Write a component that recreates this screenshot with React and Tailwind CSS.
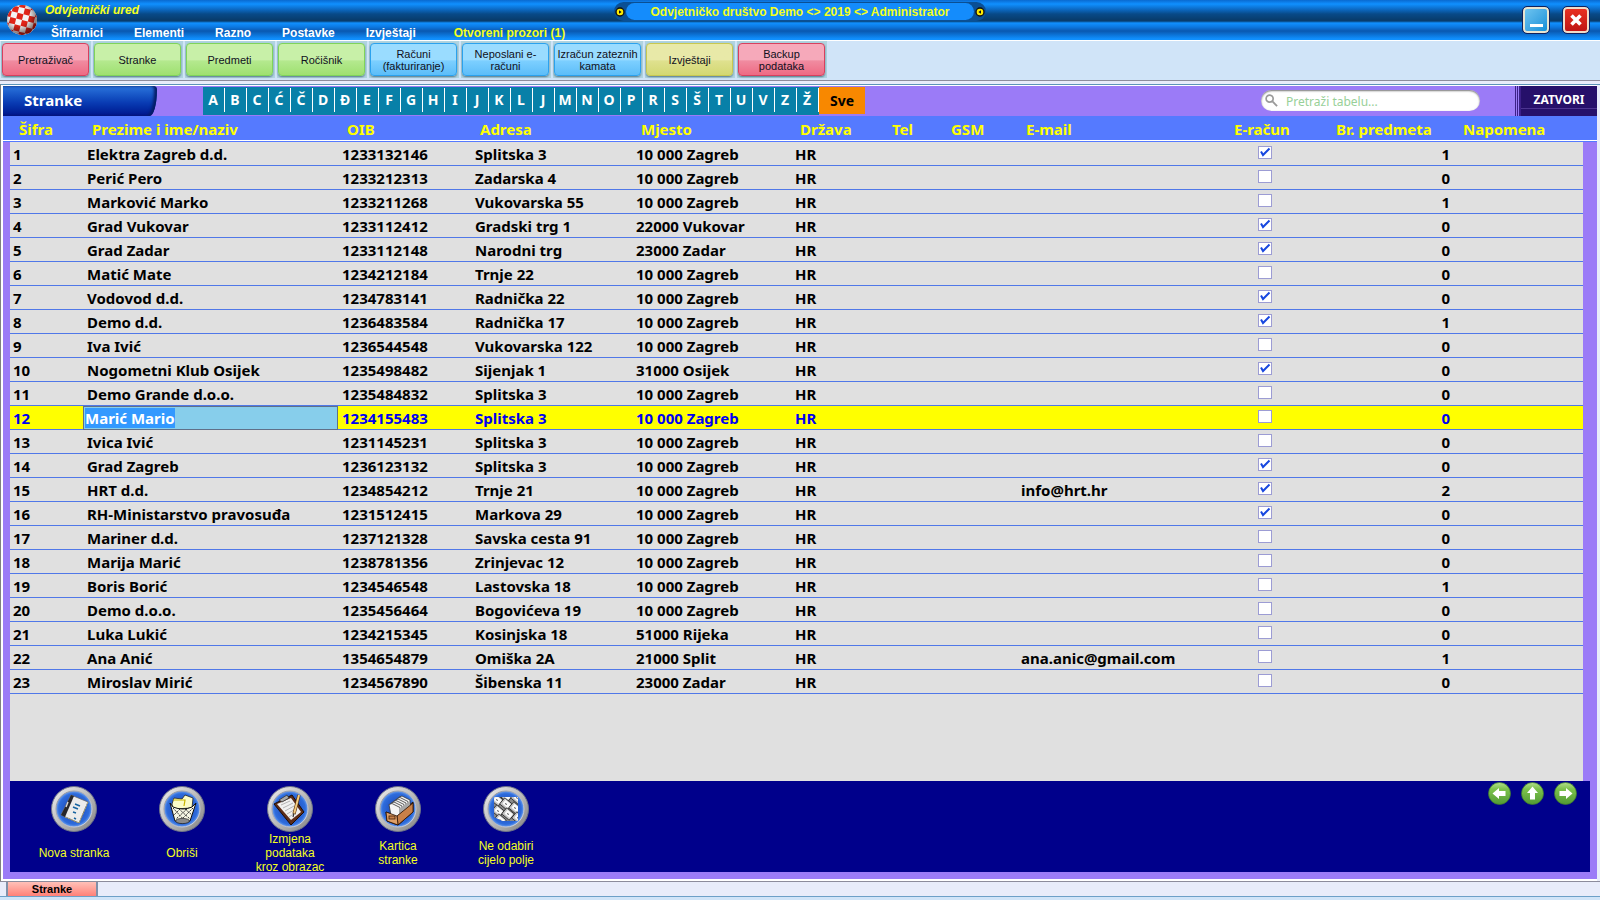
import React, { useEffect, useRef } from "react";

const MENU = ["Šifrarnici", "Elementi", "Razno", "Postavke", "Izvještaji"];

const COLORS = {
  red: "border-[#d8405e] bg-linear-to-b from-[#f6a9ba] from-50% via-[#f08ba0] via-55% to-[#ee6a84]",
  green:
    "border-[#7fd45a] bg-linear-to-b from-[#c8f0a8] from-50% via-[#b4e98e] via-55% to-[#9fe070]",
  blue: "border-[#2ba2ee] bg-linear-to-b from-[#9adcff] from-50% via-[#7ccfff] via-55% to-[#5cbdf8]",
  yellow:
    "border-[#c8c850] bg-linear-to-b from-[#e8e9a8] from-50% via-[#dfe18e] via-55% to-[#d3d872]",
};

const TOOLBAR = [
  { label: "Pretraživač", color: "red" },
  { label: "Stranke", color: "green" },
  { label: "Predmeti", color: "green" },
  { label: "Ročišnik", color: "green" },
  { label: "Računi (fakturiranje)", color: "blue" },
  { label: "Neposlani e-računi", color: "blue" },
  { label: "Izračun zateznih kamata", color: "blue" },
  { label: "Izvještaji", color: "yellow" },
  { label: "Backup podataka", color: "red" },
];

const LETTERS = "A B C Ć Č D Đ E F G H I J K L J M N O P R S Š T U V Z Ž".split(" ");

// sifra, naziv, oib, adresa, mjesto, e-mail, e-racun, br. predmeta
const STRANKE = [
  [1, "Elektra Zagreb d.d.", "1233132146", "Splitska 3", "10 000 Zagreb", "", true, 1],
  [2, "Perić Pero", "1233212313", "Zadarska 4", "10 000 Zagreb", "", false, 0],
  [3, "Marković Marko", "1233211268", "Vukovarska 55", "10 000 Zagreb", "", false, 1],
  [4, "Grad Vukovar", "1233112412", "Gradski trg 1", "22000 Vukovar", "", true, 0],
  [5, "Grad Zadar", "1233112148", "Narodni trg", "23000 Zadar", "", true, 0],
  [6, "Matić Mate", "1234212184", "Trnje 22", "10 000 Zagreb", "", false, 0],
  [7, "Vodovod d.d.", "1234783141", "Radnička 22", "10 000 Zagreb", "", true, 0],
  [8, "Demo d.d.", "1236483584", "Radnička 17", "10 000 Zagreb", "", true, 1],
  [9, "Iva Ivić", "1236544548", "Vukovarska 122", "10 000 Zagreb", "", false, 0],
  [10, "Nogometni Klub Osijek", "1235498482", "Sijenjak 1", "31000 Osijek", "", true, 0],
  [11, "Demo Grande d.o.o.", "1235484832", "Splitska 3", "10 000 Zagreb", "", false, 0],
  [12, "Marić Mario", "1234155483", "Splitska 3", "10 000 Zagreb", "", false, 0],
  [13, "Ivica Ivić", "1231145231", "Splitska 3", "10 000 Zagreb", "", false, 0],
  [14, "Grad Zagreb", "1236123132", "Splitska 3", "10 000 Zagreb", "", true, 0],
  [15, "HRT d.d.", "1234854212", "Trnje 21", "10 000 Zagreb", "info@hrt.hr", true, 2],
  [16, "RH-Ministarstvo pravosuđa", "1231512415", "Markova 29", "10 000 Zagreb", "", true, 0],
  [17, "Mariner d.d.", "1237121328", "Savska cesta 91", "10 000 Zagreb", "", false, 0],
  [18, "Marija Marić", "1238781356", "Zrinjevac 12", "10 000 Zagreb", "", false, 0],
  [19, "Boris Borić", "1234546548", "Lastovska 18", "10 000 Zagreb", "", false, 1],
  [20, "Demo d.o.o.", "1235456464", "Bogovićeva 19", "10 000 Zagreb", "", false, 0],
  [21, "Luka Lukić", "1234215345", "Kosinjska 18", "51000 Rijeka", "", false, 0],
  [22, "Ana Anić", "1354654879", "Omiška 2A", "21000 Split", "ana.anic@gmail.com", false, 1],
  [23, "Miroslav Mirić", "1234567890", "Šibenska 11", "23000 Zadar", "", false, 0],
];

const SELECTED = 12;

const COLUMNS = [
  { title: "Šifra", width: "w-[73px]" },
  { title: "Prezime i ime/naziv", width: "w-[255px]" },
  { title: "OIB", width: "w-[133px]" },
  { title: "Adresa", width: "w-[161px]" },
  { title: "Mjesto", width: "w-[159px]" },
  { title: "Država", width: "w-[92px]" },
  { title: "Tel", width: "w-[59px]" },
  { title: "GSM", width: "w-[75px]" },
  { title: "E-mail", width: "w-[208px]" },
  { title: "E-račun", width: "w-[102px]" },
  { title: "Br. predmeta", width: "w-[127px]" },
  { title: "Napomena", width: "w-auto" },
];

function Logo() {
  const squares = [];
  for (let r = 0; r < 6; r++) {
    for (let c = 0; c < 6; c++) {
      if ((r + c) % 2 === 0) {
        squares.push(<rect key={r + "-" + c} x={c * 6 - 2} y={r * 6 - 2} width="6" height="6" />);
      }
    }
  }
  return (
    <svg viewBox="0 0 32 32" className="h-8 w-8">
      <defs>
        <clipPath id="ball">
          <circle cx="16" cy="16" r="15" />
        </clipPath>
        <radialGradient id="ballShade" cx="0.4" cy="0.35" r="0.65">
          <stop offset="0.5" stopColor="#000" stopOpacity="0" />
          <stop offset="1" stopColor="#200" stopOpacity="0.6" />
        </radialGradient>
      </defs>
      <g clipPath="url(#ball)">
        <rect width="32" height="32" fill="#f4f4f4" />
        <g fill="#e02418" transform="rotate(14 16 16)">
          {squares}
        </g>
        <circle cx="16" cy="16" r="15" fill="url(#ballShade)" />
      </g>
    </svg>
  );
}

function Knob({ flip }) {
  return (
    <svg viewBox="0 0 10 10" className={"h-[10px] w-[10px] shrink-0 " + (flip ? "rotate-180" : "")}>
      <circle cx="5" cy="5" r="4" fill="#ffee00" stroke="#111" strokeWidth="1.4" />
      <path d="M4 3.2 L6.6 5 L4 6.8Z" fill="#111" />
    </svg>
  );
}

function RoundIcon({ children }) {
  return (
    <svg viewBox="0 0 46 46" className="h-[46px] w-[46px] shrink-0">
      <defs>
        <linearGradient id="ring" x1="0" y1="0" x2="1" y2="1">
          <stop offset="0" stopColor="#f0f0f0" />
          <stop offset="0.5" stopColor="#bcbcbc" />
          <stop offset="1" stopColor="#808080" />
        </linearGradient>
        <linearGradient id="rim" x1="0" y1="0" x2="1" y2="1">
          <stop offset="0" stopColor="#8c8c94" />
          <stop offset="1" stopColor="#d8dce8" />
        </linearGradient>
        <radialGradient id="disc">
          <stop offset="0.5" stopColor="#2458c8" />
          <stop offset="0.85" stopColor="#2e6cdc" />
          <stop offset="1" stopColor="#6ca0f0" />
        </radialGradient>
      </defs>
      <circle cx="23" cy="23" r="22.5" fill="url(#ring)" stroke="#6e7488" />
      <circle cx="23" cy="23" r="18" fill="url(#disc)" stroke="url(#rim)" />
      {children}
    </svg>
  );
}

function NotebookIcon() {
  return (
    <RoundIcon>
      <path d="M20 9 L37 16 L28 37 L10 29Z" fill="#ebebeb" stroke="#666" strokeWidth="0.8" />
      <path d="M20 9 L23 10 L14 31 L10 29Z" fill="#26262c" />
      <path d="M17 16 L15 21" stroke="#d8d8d8" strokeWidth="1.4" />
      <path d="M14 31 L28 37 L37 16" fill="none" stroke="#b0a878" strokeWidth="1" strokeDasharray="2 1" />
      <path d="M24 18 l5 2 M22 21 l5 2 M22 26 l3 1 M23 32 l2 1" stroke="#1663a0" strokeWidth="1.500" />
    </RoundIcon>
  );
}

function BasketIcon() {
  return (
    <RoundIcon>
      <path d="M13 18 L15 12 L23 13 L26 9 L34 12 L33 22 L14 23Z" fill="#fcfcc8" stroke="#222" strokeWidth="0.8" />
      <path d="M14 14 L26 14 L25 20" fill="none" stroke="#c8b400" strokeWidth="1.200" />
      <path d="M11 17 L16 35 Q23 39 31 35 L37 17 L33 21 Q24 25 14 21Z" fill="#f6f6e4" stroke="#111" strokeWidth="1" />
      <path
        d="M14 22 L27 36 M20 23 L31 33 M26 23 L33 29 M34 22 L20 36 M28 23 L17 33 M21 23 L15 29"
        stroke="#333"
        strokeWidth="1"
        strokeDasharray="2 1"
      />
      <ellipse cx="23.500" cy="35" rx="7" ry="2.600" fill="#8a8a8a" stroke="#222" strokeWidth="0.7" />
    </RoundIcon>
  );
}

function ClipboardIcon() {
  return (
    <RoundIcon>
      <path d="M7 18 L25 9 L37 26 L24 39Z" fill="#5c2c18" stroke="#1a0c06" strokeWidth="1" />
      <path d="M10 18 L24 12 L34 26 L24 34Z" fill="#f0f0f0" />
      <path d="M14 19 l9 -4 M16 22 l10 -5 M18 25 l9 -5 M20 28 l7 -4 M22 31 l6 -4" stroke="#a4a4a4" strokeWidth="0.8" />
      <path d="M12 14 L20 9 L22 12 L15 16Z" fill="#a8a8a8" stroke="#333" strokeWidth="0.8" />
      <path d="M32 9 L27 28" stroke="#5a3008" strokeWidth="3.200" />
      <path d="M32 9 L27 28" stroke="#f4cc80" strokeWidth="2" />
      <path d="M27 27 L26 31" stroke="#333" strokeWidth="1.200" />
    </RoundIcon>
  );
}

function CardsIcon() {
  return (
    <RoundIcon>
      <path d="M11 26 L22 30 L38 16 L38 26 L23 39 L12 35Z" fill="#a05a28" stroke="#2a1204" strokeWidth="1" />
      {[0, 1, 2, 3, 4, 5].map((i) => (
        <path
          key={i}
          d="M26 22 L24 11 L27 10 L35 14 L35 20 L31 24Z"
          transform={`translate(${-i * 2} ${i * 1.5})`}
          fill="#f4f4f4"
          stroke="#333"
          strokeWidth="0.8"
        />
      ))}
      <path d="M22 30 L38 17 L38 26 L23 39Z" fill="#c88048" stroke="#2a1204" strokeWidth="0.8" />
      <path d="M11 26 L22 30 L23 39 L12 35Z" fill="#e0a068" stroke="#2a1204" strokeWidth="0.8" />
      <rect x="14" y="30" width="6" height="3" fill="#c88048" stroke="#442008" strokeWidth="0.8" />
    </RoundIcon>
  );
}

function KeysIcon() {
  const keys = [
    [14, 14], [23, 10], [34, 12], [23, 18], [32, 22], [15, 25], [25, 28], [35, 32], [17, 34],
  ];
  return (
    <RoundIcon>
      <clipPath id="keysClip">
        <path d="M11 11 H35 V35 H20 L11 31Z" />
      </clipPath>
      <g clipPath="url(#keysClip)">
        <rect x="11" y="10" width="25" height="26" fill="#8a8a8a" />
        {keys.map(([x, y]) => (
          <g key={x + "-" + y} transform={`translate(${x} ${y}) rotate(40)`}>
            <rect x="-5" y="-4" width="10" height="8" rx="1" fill="#c4c4c4" stroke="#222" strokeWidth="0.8" />
            <rect x="-3" y="-3" width="7" height="5" rx="1" fill="#fafafa" />
            <path d="M-1 0 h2" stroke="#555" />
          </g>
        ))}
      </g>
    </RoundIcon>
  );
}

const ACTIONS = [
  { label: ["Nova stranka"], Icon: NotebookIcon },
  { label: ["Obriši"], Icon: BasketIcon },
  { label: ["Izmjena", "podataka", "kroz obrazac"], Icon: ClipboardIcon },
  { label: ["Kartica", "stranke"], Icon: CardsIcon },
  { label: ["Ne odabiri", "cijelo polje"], Icon: KeysIcon },
];

function ArrowButton({ label, turn }) {
  return (
    <button aria-label={label} className="h-[23px] w-[23px]">
      <svg viewBox="0 0 23 23" className="h-full w-full">
        <defs>
          <linearGradient id="leaf" x1="0" y1="0" x2="0" y2="1">
            <stop offset="0" stopColor="#b4e08c" />
            <stop offset="0.3" stopColor="#7cc24c" />
            <stop offset="1" stopColor="#529a34" />
          </linearGradient>
        </defs>
        <circle cx="11.500" cy="11.500" r="11" fill="url(#leaf)" stroke="#3c7c28" strokeWidth="0.7" />
        <path
          d="M4.500 11.500 L11 6 V9 H17.500 V14 H11 V17Z"
          fill="#fff"
          transform={`rotate(${turn} 11.500 11.500)`}
        />
      </svg>
    </button>
  );
}

function TitleBar() {
  return (
    <header className="relative flex h-[41px] border-b border-white bg-[linear-gradient(to_bottom,#0a6ad0_0px,#1090ff_4px,#0c6cc8_9px,#084a88_14px,#083c6c_20px,#083c6c_21px,#1090ff_23px,#0c78e0_27px,#0a58b0_31px,#0c74d8_35px,#1090ff_39px)] text-xs font-bold">
      <div className="flex w-[45px] shrink-0 items-center pl-[6px]">
        <Logo />
      </div>
      <div>
        <div className="h-5 leading-5 text-[#f4ff20] italic">Odvjetnički ured</div>
        <nav className="flex gap-[31px] pt-[5px] pl-[6px] leading-4 text-white">
          {MENU.map((item) => (
            <button key={item}>{item}</button>
          ))}
          <button className="ml-[7px] text-[#f4ff20]">Otvoreni prozori (1)</button>
        </nav>
      </div>
      <div className="absolute top-[2px] left-1/2 flex h-[19px] w-[372px] -translate-x-1/2 items-center justify-between rounded-full bg-[#0a4f94] px-px text-[#f4ff20]">
        <Knob />
        <span className="flex h-[17px] w-[348px] items-center justify-center rounded-[10px] bg-[#148cfc]">
          Odvjetničko društvo Demo &lt;&gt; 2019 &lt;&gt; Administrator
        </span>
        <Knob flip />
      </div>
      <div className="ml-auto flex gap-[14px] pt-[7px] pr-[11px]">
        <button
          aria-label="Smanji"
          className="flex h-[26px] w-[26px] items-end justify-center rounded-[4px] border-2 border-[#e8e4d0] bg-linear-to-br from-[#6cc4f0] to-[#0890d8] pb-1 outline outline-[#10205c]"
        >
          <span className="h-[3px] w-[13px] bg-white" />
        </button>
        <button
          aria-label="Zatvori program"
          className="flex h-[26px] w-[26px] items-center justify-center rounded-[4px] border-2 border-[#f0dcc8] bg-linear-to-b from-[#e83020] to-[#c01414] outline outline-[#10205c]"
        >
          <svg viewBox="0 0 14 14" className="h-[14px] w-[14px]">
            <path d="M2.500 2.500 L11.500 11.500 M11.500 2.500 L2.500 11.500" stroke="#fff" strokeWidth="3.600" />
          </svg>
        </button>
      </div>
    </header>
  );
}

function Toolbar() {
  return (
    <div className="flex h-10 gap-[2px] border-b border-[#8c8c9c] bg-[#d0e4f8] pb-[2px] pl-px">
      {TOOLBAR.map(({ label, color }) => (
        <div key={label} className="w-[90px] bg-[#b0d4e0] px-[1px] pt-[2px]">
          <button
            className={
              "h-[33px] w-[87px] rounded-[4px] border px-px text-[11px] leading-3 text-[#101020] shadow-[0_1px_2px_#557788] " +
              COLORS[color]
            }
          >
            {label}
          </button>
        </div>
      ))}
    </div>
  );
}

function PanelHeader() {
  return (
    <div className="flex h-[30px] bg-[#9b7bf7]">
      <h1 className="w-[154px] rounded-tr-[4px] rounded-br-[8px_28px] bg-linear-to-b from-[#2c74dc] via-[#0a3cb4] via-55% to-[#02128c] pl-[21px] text-[15px] leading-7 font-bold text-white shadow-[inset_-3px_0_3px_#061c64]">
        Stranke
      </h1>
      <div className="ml-[46px] flex pt-px">
        {LETTERS.map((letter, i) => (
          <div key={i} className="h-7 bg-[#0880a8]">
            <button className="h-6 w-[22px] border-r border-white pr-px text-[14px] leading-6 font-bold text-white">
              {letter}
            </button>
          </div>
        ))}
        <button className="h-[27px] w-[46px] bg-[#f88800] text-[14px] font-bold text-black">
          Sve
        </button>
      </div>
      <label className="mt-1 mr-[35px] ml-auto flex h-[21px] w-[219px] items-center rounded-full bg-white pl-1 shadow-[inset_0_1px_2px_#777]">
        <svg viewBox="0 0 14 14" className="h-[13px] w-[13px]" fill="none" stroke="#9a9a9a">
          <circle cx="5" cy="5" r="3.800" strokeWidth="1.800" />
          <path d="M8 8 L13 13" strokeWidth="2" />
        </svg>
        <input
          aria-label="Pretraži tabelu"
          placeholder="Pretraži tabelu..."
          className="ml-2 w-[180px] pt-[2px] text-[12px] leading-5 outline-none placeholder:text-[#98d098]"
        />
      </label>
      <div className="w-[6px] border-r border-[#3c2088] bg-[repeating-linear-gradient(to_right,#3c2088_0px,#3c2088_1px,#9b7bf7_1px,#9b7bf7_2px)]" />
      <button className="w-[76px] bg-[linear-gradient(to_bottom,#26106a_22px,#4c3490_22px,#4c3490_23px,#26106a_23px)] pb-[3px] text-[12px] font-bold text-white">
        ZATVORI
      </button>
    </div>
  );
}

function Tick({ checked, label }) {
  return (
    <span className="relative ml-[29px] block h-4 w-[14px]">
      <input
        type="checkbox"
        aria-label={label}
        defaultChecked={checked}
        className="peer block h-[13px] w-[14px] appearance-none border border-[#9c9cd4] bg-white"
      />
      <svg
        viewBox="0 0 14 13"
        className="pointer-events-none absolute inset-0 hidden h-[13px] w-[14px] peer-checked:block"
      >
        <path d="M3 5.500 L5 9 L11.500 2.500" fill="none" stroke="#1848e0" strokeWidth="2" />
      </svg>
    </span>
  );
}

function Row({ data, inputRef }) {
  const [sifra, naziv, oib, adresa, mjesto, email, eracun, predmeti] = data;
  const active = sifra === SELECTED;
  const base = "h-6 border-b border-[#5078e8] whitespace-nowrap";
  const cell = base + " pl-[4px]";

  return (
    <tr className={active ? "bg-[#ffff00] text-[#0000f0]" : "bg-[#e0e0e0] text-black"}>
      <td className="bg-[#9b7bf7]" />
      <td className={base + " pl-[3px]"}>{sifra}</td>
      {active ? (
        <td className="h-6 p-0">
          <input
            ref={inputRef}
            aria-label="Prezime i ime/naziv"
            defaultValue={naziv}
            className="block h-6 w-full border border-[#607088] bg-[#87ceeb] pl-px text-white outline-none selection:bg-[#3399ff] selection:text-white"
          />
        </td>
      ) : (
        <td className={cell}>{naziv}</td>
      )}
      <td className={cell}>{oib}</td>
      <td className={cell}>{adresa}</td>
      <td className={cell}>{mjesto}</td>
      <td className={cell}>HR</td>
      <td className={cell} />
      <td className={cell} />
      <td className={cell}>{email}</td>
      <td className={cell}>
        <Tick checked={eracun} label={"E-račun " + naziv} />
      </td>
      <td className={base + " pr-[4px] text-right"}>{predmeti}</td>
      <td className={cell} />
      <td className="bg-[#9b7bf7]" />
    </tr>
  );
}

function ClientTable() {
  const inputRef = useRef(null);

  useEffect(() => {
    inputRef.current?.focus();
    inputRef.current?.select();
  }, []);

  return (
    <table className="w-full table-fixed border-separate border-spacing-0 text-[15px] leading-[22px] font-bold">
      <colgroup>
        <col className="w-[7px]" />
        {COLUMNS.map((col) => (
          <col key={col.title} className={col.width} />
        ))}
        <col className="w-[14px]" />
      </colgroup>
      <thead>
        <tr className="bg-[#557aff] text-left text-[#ffff00]">
          <td className="border-b border-[#557aff] shadow-[inset_0_-1px_0_#fff]" />
          {COLUMNS.map((col) => (
            <th
              key={col.title}
              className="h-[26px] border-b border-[#557aff] pl-[9px] whitespace-nowrap shadow-[inset_0_-1px_0_#fff]"
            >
              {col.title}
            </th>
          ))}
          <td className="border-b border-[#557aff] shadow-[inset_0_-1px_0_#fff]" />
        </tr>
      </thead>
      <tbody>
        {STRANKE.map((data) => (
          <Row key={data[0]} data={data} inputRef={inputRef} />
        ))}
      </tbody>
    </table>
  );
}

function ActionBar() {
  return (
    <footer className="mr-[7px] ml-[7px] flex h-[91px] bg-[#00008b] pt-[5px] pl-[10px]">
      {ACTIONS.map(({ label, Icon }) => (
        <button
          key={label[0]}
          className="flex w-[108px] flex-col items-center self-start text-xs text-[#f4ff20]"
        >
          <Icon />
          <span className="flex h-[41px] flex-col justify-center leading-[14px]">
            {label.map((line) => (
              <span key={line} className="block">
                {line}
              </span>
            ))}
          </span>
        </button>
      ))}
      <div className="-mt-1 mr-[13px] ml-auto flex h-[23px] gap-[10px]">
        <ArrowButton label="Prethodni" turn={0} />
        <ArrowButton label="Vrh" turn={90} />
        <ArrowButton label="Sljedeći" turn={180} />
      </div>
    </footer>
  );
}

export default function App() {
  return (
    <div className="flex min-h-screen flex-col bg-[#e8ecfa] font-['Liberation_Sans',Arial,sans-serif]">
      <TitleBar />
      <Toolbar />
      <main className="mt-[3px] flex flex-1 flex-col border-t border-l border-t-[#5c94b8] border-l-[#808080]">
        <div className="mr-[3px] flex flex-1 flex-col border-t border-b-2 border-l-2 border-white bg-[#9b7bf7] font-['Noto_Sans','Open_Sans',sans-serif]">
          <PanelHeader />
          <ClientTable />
          <div className="mr-[14px] ml-[7px] flex-1 bg-[#e0e0e0]" />
          <div className="pb-[7px] font-['Liberation_Sans',Arial,sans-serif]">
            <ActionBar />
          </div>
        </div>
      </main>
      <div className="flex h-4 border-t border-b border-t-[#8c8c9c] border-b-[#6ca0c8] pl-[6px]">
        <button className="w-[92px] border-r-2 border-l-2 border-[#8090a8] bg-linear-to-b from-[#ffc0b8] to-[#ff8078] text-[11px] leading-[14px] font-bold text-black">
          Stranke
        </button>
      </div>
      <div className="h-[3px] bg-[#d0e4f8]" />
    </div>
  );
}
